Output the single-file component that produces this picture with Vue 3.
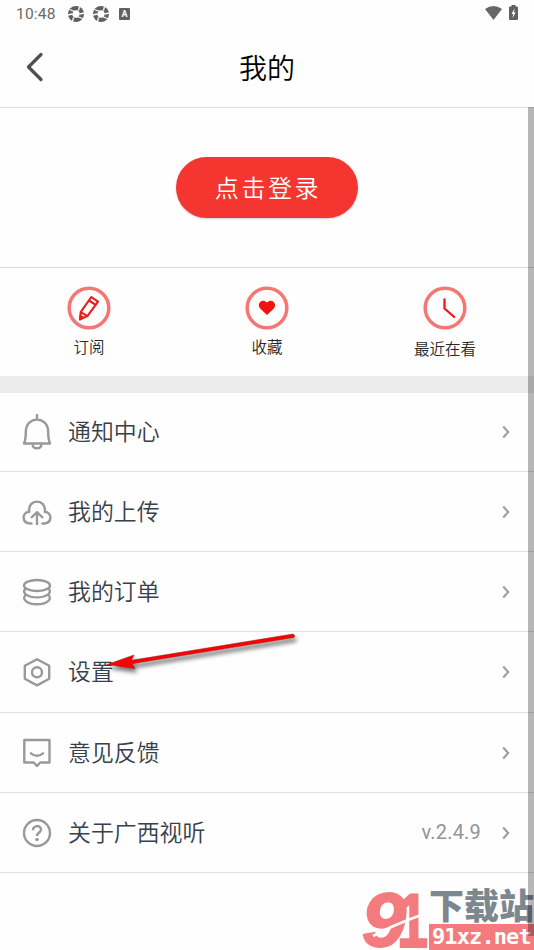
<script setup>
const shortcuts = [
  { id: 'sub', label: '订阅' },
  { id: 'fav', label: '收藏' },
  { id: 'recent', label: '最近在看' },
]
const rows = [
  { id: 'bell', label: '通知中心' },
  { id: 'upload', label: '我的上传' },
  { id: 'orders', label: '我的订单' },
  { id: 'settings', label: '设置' },
  { id: 'feedback', label: '意见反馈' },
  { id: 'about', label: '关于广西视听', value: 'v.2.4.9' },
]
</script>

<template>
  <main class="screen">
    <div class="status">
      <span class="time">10:48</span>
      <svg v-for="n in 2" :key="n" class="shutter" viewBox="0 0 16 16">
        <circle cx="8" cy="8" r="8" fill="#606060" />
        <path d="M5.500 4.500 10 4.200 12 7.500 10.500 11.500 6 11.800 4 8.500Z" fill="#fff" />
        <path d="M5.500 5 1.500 3.500M10.500 4.500 11.500.3M12 8 16 7M10.500 11 14.500 12.500M5.500 11.500 4.500 15.700M4 8 0 9" stroke="#fff" stroke-width="1.300" />
      </svg>
      <span class="badge">A</span>
      <span class="spacer"></span>
      <svg class="wifi" viewBox="0 0 17 14"><path d="M0 3Q8.500-3 17 3L8.500 14Z" fill="#666" /></svg>
      <svg class="battery" viewBox="0 0 9 15">
        <path d="M2.500 0h4v1.500H8q1 0 1 1V14q0 1-1 1H1q-1 0-1-1V2.500q0-1 1-1h1.500Z" fill="#606060" />
        <path d="M5.500 3.500 2.500 9h1.700L3.500 13 6.700 7.500H5Z" fill="#fff" />
      </svg>
    </div>

    <header class="header">
      <svg class="back" viewBox="0 0 18 30"><path d="M15 2.500 2.500 15l12.500 12.500" fill="none" stroke="#505050" stroke-width="3.300" stroke-linecap="round" stroke-linejoin="round" /></svg>
      <h1>我的</h1>
    </header>

    <section class="login"><button>点击登录</button></section>

    <nav class="shortcuts">
      <div v-for="s in shortcuts" :key="s.id" class="shortcut" :class="s.id">
        <svg viewBox="0 0 44 44">
          <circle cx="22" cy="22" r="19.800" fill="none" stroke="#f47773" stroke-width="3.500" />
          <g v-if="s.id === 'sub'" fill="none" stroke="#f0191a" stroke-width="2.100" stroke-linejoin="round">
            <path d="M13 33.300 13.700 26.200 24.300 11 31 15.600 20.400 30.100ZM13.700 26.200 20.400 30.100M22 14.500 28.700 18.900" />
            <path d="m13 33.300.5-3.300 2.600 1.600Z" fill="#f0191a" />
          </g>
          <path v-else-if="s.id === 'fav'" d="M22 29 15.400 22.700C11.300 18.500 16.500 11.500 22 16.400 27.500 11.500 32.700 18.500 28.600 22.700Z" fill="#f0150f" />
          <path v-else d="M21.500 13.500V22.500L31.200 31" fill="none" stroke="#f51414" stroke-width="2.300" stroke-linecap="round" stroke-linejoin="round" />
        </svg>
        <span>{{ s.label }}</span>
      </div>
    </nav>

    <div class="divider"></div>

    <ul class="menu">
      <li v-for="r in rows" :key="r.id" :class="r.id">
        <svg class="icon" viewBox="0 0 30 36" fill="none" stroke="#999" stroke-width="2.400" stroke-linejoin="round">
          <template v-if="r.id === 'bell'">
            <path d="M15 1v4.500M2 29.500H28C26.500 26 26.200 24 26.200 18 26.200 1.500 3.800 1.500 3.800 18 3.800 24 3.500 26 2 29.500Z" stroke-linecap="round" />
            <path d="M10.500 30.300C11 35.600 19 35.600 19.500 30.300" />
          </template>
          <template v-else-if="r.id === 'upload'">
            <path d="M9.500 29.500H7.700C-.2 28.500-.4 18.700 7.200 17.800 5.300 4.200 24.700 4.200 22.800 17.800 30.400 18.700 30.200 28.500 22.300 29.500H20.500" stroke-linecap="round" />
            <path d="M15 31V18.500M9 24 15 18.200 21 24" />
          </template>
          <template v-else-if="r.id === 'orders'">
            <ellipse cx="15" cy="11.500" rx="13" ry="5.500" />
            <path d="M3.500 14.500C-1 19 6 23.400 15 23.400S31 19 26.500 14.500M3.500 21C-1 25.500 6 30.300 15 30.300S31 25.500 26.500 21" />
          </template>
          <template v-else-if="r.id === 'settings'">
            <path d="M15 5.200 27.200 11.800V24.800L15 31.400 2.800 24.800V11.800Z" />
            <circle cx="15" cy="18.300" r="5" />
          </template>
          <template v-else-if="r.id === 'feedback'">
            <path d="M2.300 5H27.500V27.500H18.300L15 31 11.700 27.500H2.300Z" />
            <path d="M9 18.300Q15 23.300 21 18.300" stroke-linecap="round" />
          </template>
          <template v-else>
            <circle cx="15" cy="18" r="13" />
            <path d="M11 15.300C11 9.800 19 9.800 19 14.500 19 17.500 15 17.500 15 21" />
            <circle cx="15" cy="24.500" r="1.800" fill="#999" stroke="none" />
          </template>
        </svg>
        <span class="label">{{ r.label }}</span>
        <span v-if="r.value" class="value">{{ r.value }}</span>
        <svg class="chevron" viewBox="0 0 8 14"><path d="m1.200 1.500 5 5.500-5 5.500" fill="none" stroke="#9b9da4" stroke-width="2.100" /></svg>
      </li>
    </ul>

    <svg class="arrow" viewBox="0 0 200 60">
      <path d="M7 44.500 34 35 31.500 40.300 193 14Q196 15.500 194 17.500L32 43.700 35 48.500Z" fill="#fe0000" stroke="#8b2020" stroke-width=".5" />
    </svg>

    <div class="watermark">
      <svg class="mark" viewBox="0 0 66 62">
        <text class="nine" x="-1" y="57" textLength="44" lengthAdjust="spacingAndGlyphs">9</text>
        <text x="34" y="58" textLength="31" lengthAdjust="spacingAndGlyphs">1</text>
        <path d="M10 47Q30 36 61 25" fill="none" stroke="#fff" stroke-width="2.800" />
      </svg>
      <div class="site">
        <div class="name">下载站</div>
        <div class="domain">91xz.net</div>
      </div>
    </div>
    <div class="scrollbar"></div>
  </main>
</template>

<style>
body { background: #fff; }
</style>

<style scoped>
.screen {
  position: relative;
  width: 534px;
  height: 950px;
  overflow: hidden;
  background: #fefefe;
  font-family: "Noto Sans CJK SC", sans-serif;
  font-weight: 350;
}
.status { display: flex; align-items: center; height: 27px; padding: 0 16px 0 16px; }
.time { width: 52px; font: 400 15.500px/27px Roboto, sans-serif; letter-spacing: .2px; color: #686868; padding-top: 1px; }
.shutter { width: 16px; height: 16px; margin-right: 8.500px; }
.badge { width: 11px; height: 12px; margin-left: 2px; border-radius: 1px; background: #626262; color: #fff; font: 700 9px/12px Roboto, sans-serif; text-align: center; }
.spacer { flex: 1; }
.wifi { width: 17px; height: 14px; margin: -2px 7px 0 0; }
.battery { width: 9px; height: 15px; margin-top: -2px; }
.header { display: grid; grid-template-columns: 60px 1fr 60px; align-items: center; height: 80px; border-bottom: 1px solid #dedede; }
.back { width: 18px; height: 30px; margin-left: 26px; }
h1 { margin: 0; font-size: 28px; line-height: 40px; font-weight: 350; text-align: center; color: #000; }
.login { display: flex; align-items: center; justify-content: center; height: 159px; border-bottom: 1px solid #d8d8d8; }
.login button { width: 182px; height: 61px; padding: 0 0 2px 2px; border: 0; border-radius: 31px; background: #f53530; box-shadow: 0 1px 2px #0003; color: #fff; font: inherit; font-size: 24px; letter-spacing: 2.600px; }
.shortcuts { display: grid; grid-template-columns: repeat(3, 1fr); height: 108px; }
.shortcut { display: flex; flex-direction: column; align-items: center; padding-top: 18px; }
.shortcut svg { width: 44px; height: 44px; }
.shortcut span { margin-top: 4px; font-size: 15.500px; line-height: 24px; color: #282828; }
.shortcut.recent span { margin-top: 6px; }
.divider { height: 17px; background: #ececec; }
.menu { margin: 0; padding: 0; list-style: none; }
.menu li { box-sizing: border-box; display: flex; align-items: center; height: 80px; padding: 0 24px 0 22px; border-bottom: 1px solid #e0e0e0; }
.menu .bell { height: 79px; }
.menu .settings { height: 81px; }
.icon { width: 30px; height: 36px; margin-right: 16px; }
.label { flex: 1; padding-bottom: 4px; font-size: 22.900px; line-height: 34px; color: #38404c; }
.value { margin-right: 21px; padding-bottom: 2px; font: 400 20px/30px Roboto, sans-serif; color: #8f949e; letter-spacing: .2px; }
.chevron { width: 8px; height: 14px; }
.arrow { position: absolute; left: 100px; top: 620px; width: 200px; height: 60px; filter: drop-shadow(2px 4px 2px #0008); }
.watermark { position: absolute; right: 0; bottom: -1px; display: flex; width: 171px; height: 62px; }
.mark { flex: none; width: 66px; height: 62px; overflow: visible; }
.mark text { font: 700 76px "Liberation Sans", sans-serif; fill: #f47b7d; stroke: #f47b7d; stroke-width: 2; }
.mark .nine { font-style: italic; }
.site { flex: 1; white-space: nowrap; }
.name { height: 35px; font-size: 35px; line-height: 30px; font-weight: 900; color: #7d878e; }
.domain { height: 27px; background: #f47b7d; color: #fff; font: 700 22px/25px "DejaVu Sans Mono", monospace; letter-spacing: -.9px; padding-left: 3px; }
.scrollbar { position: absolute; right: 0; top: 107px; width: 6px; height: 829px; background: #00000048; }
</style>
